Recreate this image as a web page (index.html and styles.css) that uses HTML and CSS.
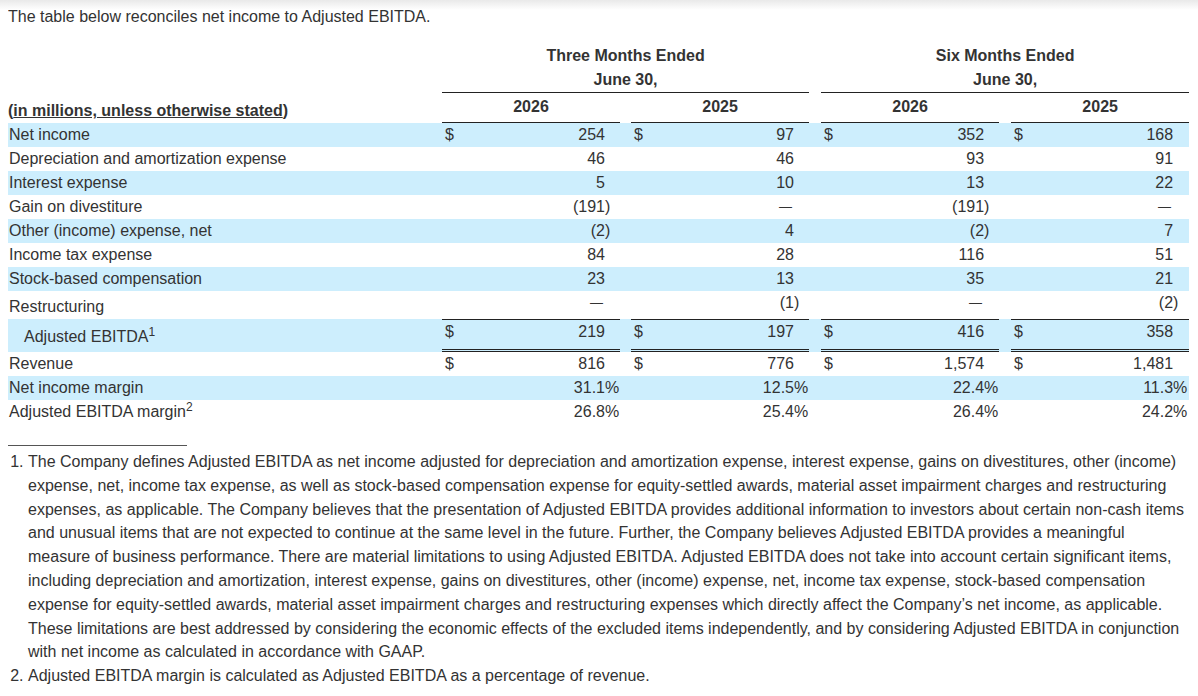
FILE: index.html
```html
<!DOCTYPE html>
<html lang="en">
<head>
    <meta charset="UTF-8">
    <title>Adjusted EBITDA Reconciliation</title>
    <link rel="stylesheet" href="styles.css">
</head>
<body>
    <p class="intro">The table below reconciles net income to Adjusted EBITDA.</p>

    <table class="recon">
        <colgroup>
            <col class="c-label">
            <col class="c-cur"><col class="c-num"><col class="c-suf">
            <col class="c-gap">
            <col class="c-cur"><col class="c-num"><col class="c-suf">
            <col class="c-gap2">
            <col class="c-cur"><col class="c-num"><col class="c-suf">
            <col class="c-gap2">
            <col class="c-cur"><col class="c-num4"><col class="c-suf4">
        </colgroup>
        <thead>
            <tr class="period">
                <td></td>
                <th colspan="7">Three Months Ended</th>
                <td></td>
                <th colspan="7">Six Months Ended</th>
            </tr>
            <tr class="period-date">
                <td></td>
                <th colspan="7">June 30,</th>
                <td></td>
                <th colspan="7">June 30,</th>
            </tr>
            <tr class="years">
                <td class="label units">(<u>in millions, unless otherwise stated</u>)</td>
                <th colspan="3">2026</th>
                <td></td>
                <th colspan="3">2025</th>
                <td></td>
                <th colspan="3">2026</th>
                <td></td>
                <th colspan="3">2025</th>
            </tr>
        </thead>
        <tbody>
            <tr class="shade">
                <td class="label">Net income</td>
                <td class="cur">$</td><td class="num">254</td><td class="suf"></td><td></td>
                <td class="cur">$</td><td class="num">97</td><td class="suf"></td><td></td>
                <td class="cur">$</td><td class="num">352</td><td class="suf"></td><td></td>
                <td class="cur">$</td><td class="num">168</td><td class="suf"></td>
            </tr>
            <tr>
                <td class="label">Depreciation and amortization expense</td>
                <td class="cur"></td><td class="num">46</td><td class="suf"></td><td></td>
                <td class="cur"></td><td class="num">46</td><td class="suf"></td><td></td>
                <td class="cur"></td><td class="num">93</td><td class="suf"></td><td></td>
                <td class="cur"></td><td class="num">91</td><td class="suf"></td>
            </tr>
            <tr class="shade">
                <td class="label">Interest expense</td>
                <td class="cur"></td><td class="num">5</td><td class="suf"></td><td></td>
                <td class="cur"></td><td class="num">10</td><td class="suf"></td><td></td>
                <td class="cur"></td><td class="num">13</td><td class="suf"></td><td></td>
                <td class="cur"></td><td class="num">22</td><td class="suf"></td>
            </tr>
            <tr>
                <td class="label">Gain on divestiture</td>
                <td class="cur"></td><td class="num">(191</td><td class="suf">)</td><td></td>
                <td class="cur"></td><td class="num"><span class="dash">—</span></td><td class="suf"></td><td></td>
                <td class="cur"></td><td class="num">(191</td><td class="suf">)</td><td></td>
                <td class="cur"></td><td class="num"><span class="dash">—</span></td><td class="suf"></td>
            </tr>
            <tr class="shade">
                <td class="label">Other (income) expense, net</td>
                <td class="cur"></td><td class="num">(2</td><td class="suf">)</td><td></td>
                <td class="cur"></td><td class="num">4</td><td class="suf"></td><td></td>
                <td class="cur"></td><td class="num">(2</td><td class="suf">)</td><td></td>
                <td class="cur"></td><td class="num">7</td><td class="suf"></td>
            </tr>
            <tr>
                <td class="label">Income tax expense</td>
                <td class="cur"></td><td class="num">84</td><td class="suf"></td><td></td>
                <td class="cur"></td><td class="num">28</td><td class="suf"></td><td></td>
                <td class="cur"></td><td class="num">116</td><td class="suf"></td><td></td>
                <td class="cur"></td><td class="num">51</td><td class="suf"></td>
            </tr>
            <tr class="shade">
                <td class="label">Stock-based compensation</td>
                <td class="cur"></td><td class="num">23</td><td class="suf"></td><td></td>
                <td class="cur"></td><td class="num">13</td><td class="suf"></td><td></td>
                <td class="cur"></td><td class="num">35</td><td class="suf"></td><td></td>
                <td class="cur"></td><td class="num">21</td><td class="suf"></td>
            </tr>
            <tr class="last-item">
                <td class="label">Restructuring</td>
                <td class="cur"></td><td class="num"><span class="dash">—</span></td><td class="suf"></td><td></td>
                <td class="cur"></td><td class="num">(1</td><td class="suf">)</td><td></td>
                <td class="cur"></td><td class="num"><span class="dash">—</span></td><td class="suf"></td><td></td>
                <td class="cur"></td><td class="num">(2</td><td class="suf">)</td>
            </tr>
            <tr class="shade total">
                <td class="label indent">Adjusted EBITDA<sup>1</sup></td>
                <td class="cur">$</td><td class="num">219</td><td class="suf"></td><td></td>
                <td class="cur">$</td><td class="num">197</td><td class="suf"></td><td></td>
                <td class="cur">$</td><td class="num">416</td><td class="suf"></td><td></td>
                <td class="cur">$</td><td class="num">358</td><td class="suf"></td>
            </tr>
            <tr>
                <td class="label">Revenue</td>
                <td class="cur">$</td><td class="num">816</td><td class="suf"></td><td></td>
                <td class="cur">$</td><td class="num">776</td><td class="suf"></td><td></td>
                <td class="cur">$</td><td class="num">1,574</td><td class="suf"></td><td></td>
                <td class="cur">$</td><td class="num">1,481</td><td class="suf"></td>
            </tr>
            <tr class="shade">
                <td class="label">Net income margin</td>
                <td class="cur"></td><td class="num">31.1</td><td class="suf">%</td><td></td>
                <td class="cur"></td><td class="num">12.5</td><td class="suf">%</td><td></td>
                <td class="cur"></td><td class="num">22.4</td><td class="suf">%</td><td></td>
                <td class="cur"></td><td class="num">11.3</td><td class="suf">%</td>
            </tr>
            <tr>
                <td class="label">Adjusted EBITDA margin<sup>2</sup></td>
                <td class="cur"></td><td class="num">26.8</td><td class="suf">%</td><td></td>
                <td class="cur"></td><td class="num">25.4</td><td class="suf">%</td><td></td>
                <td class="cur"></td><td class="num">26.4</td><td class="suf">%</td><td></td>
                <td class="cur"></td><td class="num">24.2</td><td class="suf">%</td>
            </tr>
        </tbody>
    </table>

    <div class="notes">
        <hr class="notes-rule">
        <ol>
            <li>The Company defines Adjusted EBITDA as net income adjusted for depreciation and amortization expense, interest expense, gains on divestitures, other (income) expense, net, income tax expense, as well as stock-based compensation expense for equity-settled awards, material asset impairment charges and restructuring expenses, as applicable. The Company believes that the presentation of Adjusted EBITDA provides additional information to investors about certain non-cash items and unusual items that are not expected to continue at the same level in the future. Further, the Company believes Adjusted EBITDA provides a meaningful measure of business performance. There are material limitations to using Adjusted EBITDA. Adjusted EBITDA does not take into account certain significant items, including depreciation and amortization, interest expense, gains on divestitures, other (income) expense, net, income tax expense, stock-based compensation expense for equity-settled awards, material asset impairment charges and restructuring expenses which directly affect the Company’s net income, as applicable. These limitations are best addressed by considering the economic effects of the excluded items independently, and by considering Adjusted EBITDA in conjunction with net income as calculated in accordance with GAAP.</li>
            <li>Adjusted EBITDA margin is calculated as Adjusted EBITDA as a percentage of revenue.</li>
        </ol>
    </div>
</body>
</html>
```

FILE: styles.css
```css
html {
    background: #fff linear-gradient(to bottom, #e9e9e9 0, #fff 10px) no-repeat;
}
body {
    margin: 8px;
    font-family: "Liberation Sans", Arial, Helvetica, sans-serif;
    font-size: 16px;
    color: #333;
}
.intro {
    margin: 0;
    line-height: normal;
}

/* reconciliation table */
.recon {
    margin-top: 18px;
    width: 1181px;
    table-layout: fixed;
    border-collapse: separate;
    border-spacing: 0;
    line-height: 24px;
}
.c-label { width: 434px; }
.c-cur { width: 18px; }
.c-num { width: 145px; }
.c-suf { width: 15px; }
.c-num4 { width: 144px; }
.c-suf4 { width: 16px; }
.c-gap { width: 11px; }
.c-gap2 { width: 12px; }

.recon td,
.recon th {
    padding: 0;
    white-space: nowrap;
}
.recon th {
    font-weight: bold;
    text-align: center;
}
.period-date th {
    border-bottom: 1px solid #222;
}
.years th {
    height: 28px;
    padding-bottom: 1px;
    vertical-align: middle;
    border-bottom: 1px solid #222;
}
.units {
    font-weight: bold;
    vertical-align: bottom;
}

.recon tbody td {
    vertical-align: top;
}
.recon tbody td.label {
    vertical-align: bottom;
    padding-left: 1px;
}
.shade {
    background: #cdeefd;
}
.cur {
    padding-left: 3px !important;
    text-align: left;
}
.num {
    text-align: right;
}
.suf {
    text-align: left;
}
.dash {
    display: inline-block;
    font-size: 13px;
    line-height: 24px;
    vertical-align: top;
    margin-right: 2px;
}

.last-item td.label {
    padding-top: 4px;
}
.total td.label {
    padding-top: 6px;
    padding-bottom: 3px;
}
.total .cur,
.total .num,
.total .suf {
    border-top: 1px solid #222;
    border-bottom: 3px double #222;
}
.indent {
    padding-left: 16px !important;
}
sup {
    font-size: 12px;
    line-height: 0;
    vertical-align: 6px;
}

/* footnotes */
.notes {
    margin-top: 21px;
    margin-right: 4px;
}
.notes-rule {
    width: 179px;
    margin: 0;
    border: 0;
    border-top: 1px solid #555;
}
.notes ol {
    margin: 4px 0 0;
    padding-left: 20px;
    line-height: 23.8px;
}
```
